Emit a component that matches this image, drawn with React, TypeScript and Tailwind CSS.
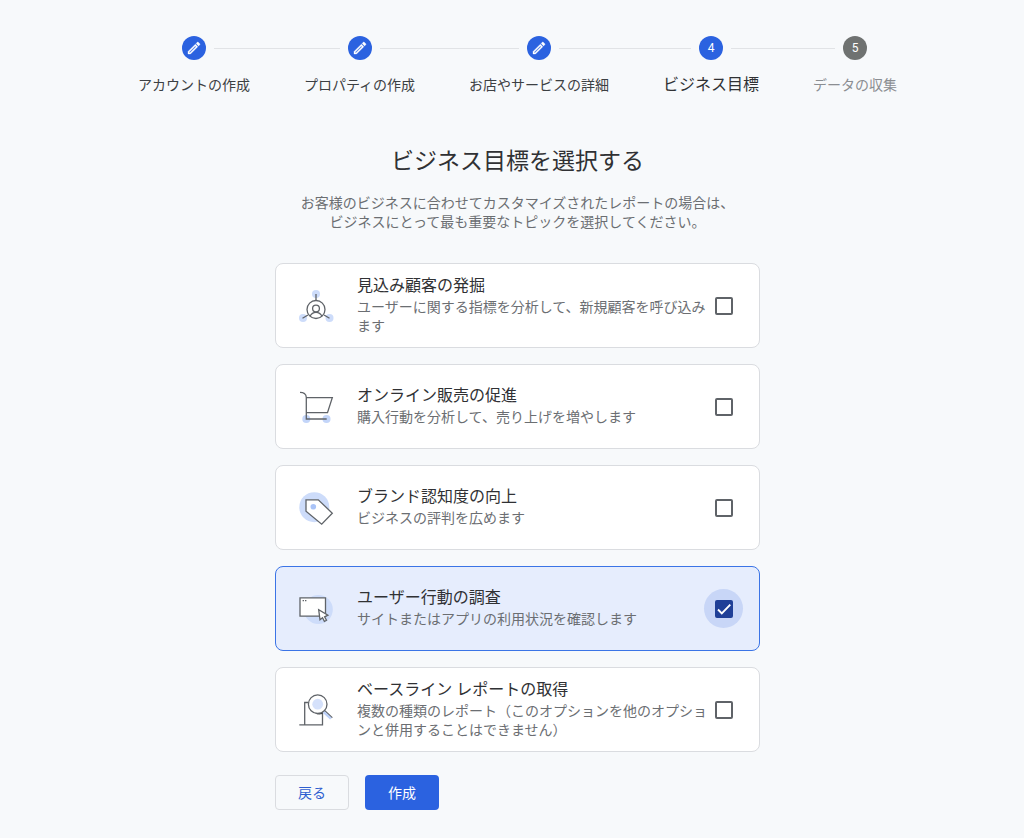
import { useState, type ReactNode } from 'react'

const steps = [
  { label: 'アカウントの作成', state: 'done' },
  { label: 'プロパティの作成', state: 'done' },
  { label: 'お店やサービスの詳細', state: 'done' },
  { label: 'ビジネス目標', state: 'current' },
  { label: 'データの収集', state: 'upcoming' },
]

const labelStyles: Record<string, string> = {
  done: 'text-sm leading-6 text-[#3c4043]',
  current: 'text-base leading-6 text-[#303134]',
  upcoming: 'text-sm leading-6 text-[#8b8e92]',
}

function PencilIcon() {
  return (
    <svg viewBox="0 0 24 24" className="size-4" fill="currentColor" stroke="currentColor" strokeWidth="0.5" aria-hidden="true">
      <path d="M14.06 9.02l.92.92L5.92 19H5v-.92l9.06-9.06M17.66 3c-.25 0-.51.1-.7.29l-1.83 1.83 3.75 3.75 1.83-1.83c.39-.39.39-1.02 0-1.41l-2.34-2.34c-.2-.2-.45-.29-.71-.29zm-3.6 3.19L3 17.25V21h3.75L17.81 9.94l-3.75-3.75z" />
    </svg>
  )
}

function Icon({ children }: { children: ReactNode }) {
  return (
    <svg viewBox="0 0 36 36" className="size-9 shrink-0" fill="none" stroke="#5f6368" strokeWidth="1.3" aria-hidden="true">
      {children}
    </svg>
  )
}

const leadsIcon = (
  <Icon>
    <g fill="#cddcfa" stroke="none">
      <circle cx="18" cy="6" r="4" />
      <circle cx="5" cy="30" r="4" />
      <circle cx="31.5" cy="30" r="4" />
    </g>
    <circle cx="18" cy="21.5" r="9" />
    <circle cx="18" cy="20.6" r="3.4" />
    <path d="M12 28.3c1.2-2.6 3.4-4 6-4s4.8 1.4 6 4M18 6v6.5M10 27l-5.5 3.3M26 27l5.5 3.3" />
  </Icon>
)

const salesIcon = (
  <Icon>
    <g fill="#c3d5f9" stroke="none">
      <circle cx="8.3" cy="30" r="4" />
      <circle cx="28.5" cy="30" r="4" />
    </g>
    <path d="M2 3.3c3.5 0 6.3 1.5 6.3 5.2V30h20.4M8.3 8.7h26l-4.8 15H8.3" />
  </Icon>
)

const brandIcon = (
  <Icon>
    <circle cx="16.3" cy="17.2" r="15" fill="#cddcfa" stroke="none" />
    <path d="M8 9.8h12.3l14 13.4-10.6 11L8 21.2z" fill="#fff" />
    <circle cx="15.3" cy="16.8" r="2.8" fill="#a9c3f7" stroke="none" />
  </Icon>
)

const behaviorIcon = (
  <Icon>
    <circle cx="20.3" cy="18.5" r="14.5" fill="#cddcfa" stroke="none" />
    <path d="M2 6.8h25.5v18.4H2z" fill="#fff" />
    <path d="M4.6 9.6H6M7 9.6h1.4" />
    <path d="M20.7 18.8l1.3 10 2.5-2 1.9 3.6 2.1-1.2-1.9-3.4 3.3-1.7z" fill="#fff" />
  </Icon>
)

const baselineIcon = (
  <Icon>
    <path d="M1.3 32.8h23.2V20M6.7 32.8V10.5h6" />
    <path d="M17 21.5l7.5-2v2.6c-2.7.8-5.2.6-7.5-.6z" fill="#3c4043" stroke="none" />
    <path d="M26.5 18.5l7.8 7.2" />
    <path d="M25.7 20l7.2 6.6" stroke="#bdd1f9" strokeWidth="2.4" />
    <circle cx="19.7" cy="12.2" r="9.3" fill="#fff" />
    <circle cx="19.7" cy="12.2" r="5.4" fill="#d5e1fb" stroke="none" />
  </Icon>
)

const goals = [
  {
    id: 'leads',
    title: '見込み顧客の発掘',
    description: 'ユーザーに関する指標を分析して、新規顧客を呼び込みます',
    icon: leadsIcon,
  },
  {
    id: 'sales',
    title: 'オンライン販売の促進',
    description: '購入行動を分析して、売り上げを増やします',
    icon: salesIcon,
  },
  {
    id: 'brand',
    title: 'ブランド認知度の向上',
    description: 'ビジネスの評判を広めます',
    icon: brandIcon,
  },
  {
    id: 'behavior',
    title: 'ユーザー行動の調査',
    description: 'サイトまたはアプリの利用状況を確認します',
    icon: behaviorIcon,
  },
  {
    id: 'baseline',
    title: 'ベースライン レポートの取得',
    description: '複数の種類のレポート（このオプションを他のオプションと併用することはできません）',
    icon: baselineIcon,
  },
]

function Stepper() {
  return (
    <ol className="flex justify-center">
      {steps.map((step, i) => (
        <li key={step.label} className="flex flex-col gap-[13px]">
          <div className="flex items-center gap-2">
            <span className={i === 0 ? 'flex-1' : 'h-px flex-1 bg-[#e1e3e6]'} />
            <span
              className={`flex size-6 items-center justify-center rounded-full text-xs text-white ${
                step.state === 'upcoming' ? 'bg-[#6f7271]' : 'bg-[#2b62e0]'
              }`}
            >
              {step.state === 'done' ? <PencilIcon /> : i + 1}
            </span>
            <span className={i === steps.length - 1 ? 'flex-1' : 'h-px flex-1 bg-[#e1e3e6]'} />
          </div>
          <span className={`px-[27px] whitespace-nowrap ${labelStyles[step.state]}`}>{step.label}</span>
        </li>
      ))}
    </ol>
  )
}

export default function App() {
  const [selected, setSelected] = useState<string[]>(['behavior'])

  const toggle = (id: string) =>
    setSelected((prev) => (prev.includes(id) ? prev.filter((x) => x !== id) : [...prev, id]))

  return (
    <main className="min-h-screen bg-[#f7f9fb] pt-9 pb-7 pl-[11px] font-['Roboto','Noto_Sans_CJK_JP',sans-serif]">
      <Stepper />

      {/* Heading */}
      <header className="mt-[49px] text-center">
        <h1 className="text-[23px] leading-8 text-[#303134]">ビジネス目標を選択する</h1>
        <p className="mt-4 text-sm leading-[19px] text-[#6b6e72]">
          お客様のビジネスに合わせてカスタマイズされたレポートの場合は、
          <br />
          ビジネスにとって最も重要なトピックを選択してください。
        </p>
      </header>

      <form className="mx-auto mt-[31px] max-w-[485px]" onSubmit={(e) => e.preventDefault()}>
        {/* Goals */}
        <div className="flex flex-col gap-4">
          {goals.map((goal) => {
            const checked = selected.includes(goal.id)
            return (
              <label
                key={goal.id}
                htmlFor={goal.id}
                className={`flex min-h-[85px] items-center rounded-lg border pr-4 pl-[22px] ${
                  checked ? 'border-[#3b74e6] bg-[#e6edfd]' : 'border-[#dadce0] bg-white'
                }`}
              >
                {goal.icon}
                <span className="ml-[23px] min-w-0 flex-1 pb-0.5">
                  <span className="block text-base leading-6 text-[#303134]">{goal.title}</span>
                  <span className="block text-sm leading-[19px] text-[#6b6e72]">{goal.description}</span>
                </span>
                {/* the halo may reach over the end of a long description */}
                <span
                  className={`-ml-2 flex size-[39px] shrink-0 items-center justify-center rounded-full ${
                    checked ? 'bg-[#c8d6f7]' : ''
                  }`}
                >
                  <span className="relative flex">
                    <input
                      id={goal.id}
                      type="checkbox"
                      checked={checked}
                      onChange={() => toggle(goal.id)}
                      className="size-[18px] appearance-none rounded-xs border-2 border-[#5f6368] checked:border-[#1f3f97] checked:bg-[#1f3f97]"
                    />
                    {checked && (
                      <svg
                        viewBox="0 0 18 18"
                        className="pointer-events-none absolute inset-0 size-[18px]"
                        fill="none"
                        stroke="#fff"
                        strokeWidth="1.9"
                        aria-hidden="true"
                      >
                        <path d="M3 9.5l3.8 3.9L15.3 4.6" />
                      </svg>
                    )}
                  </span>
                </span>
              </label>
            )
          })}
        </div>

        {/* Actions */}
        <div className="mt-[23px] flex gap-4">
          <button
            type="button"
            className="h-[35px] w-[74px] rounded-sm border border-[#dadce0] text-sm text-[#2f5fd0]"
          >
            戻る
          </button>
          <button type="submit" className="h-[35px] w-[74px] rounded-sm bg-[#2b62e0] text-sm text-white">
            作成
          </button>
        </div>
      </form>
    </main>
  )
}
